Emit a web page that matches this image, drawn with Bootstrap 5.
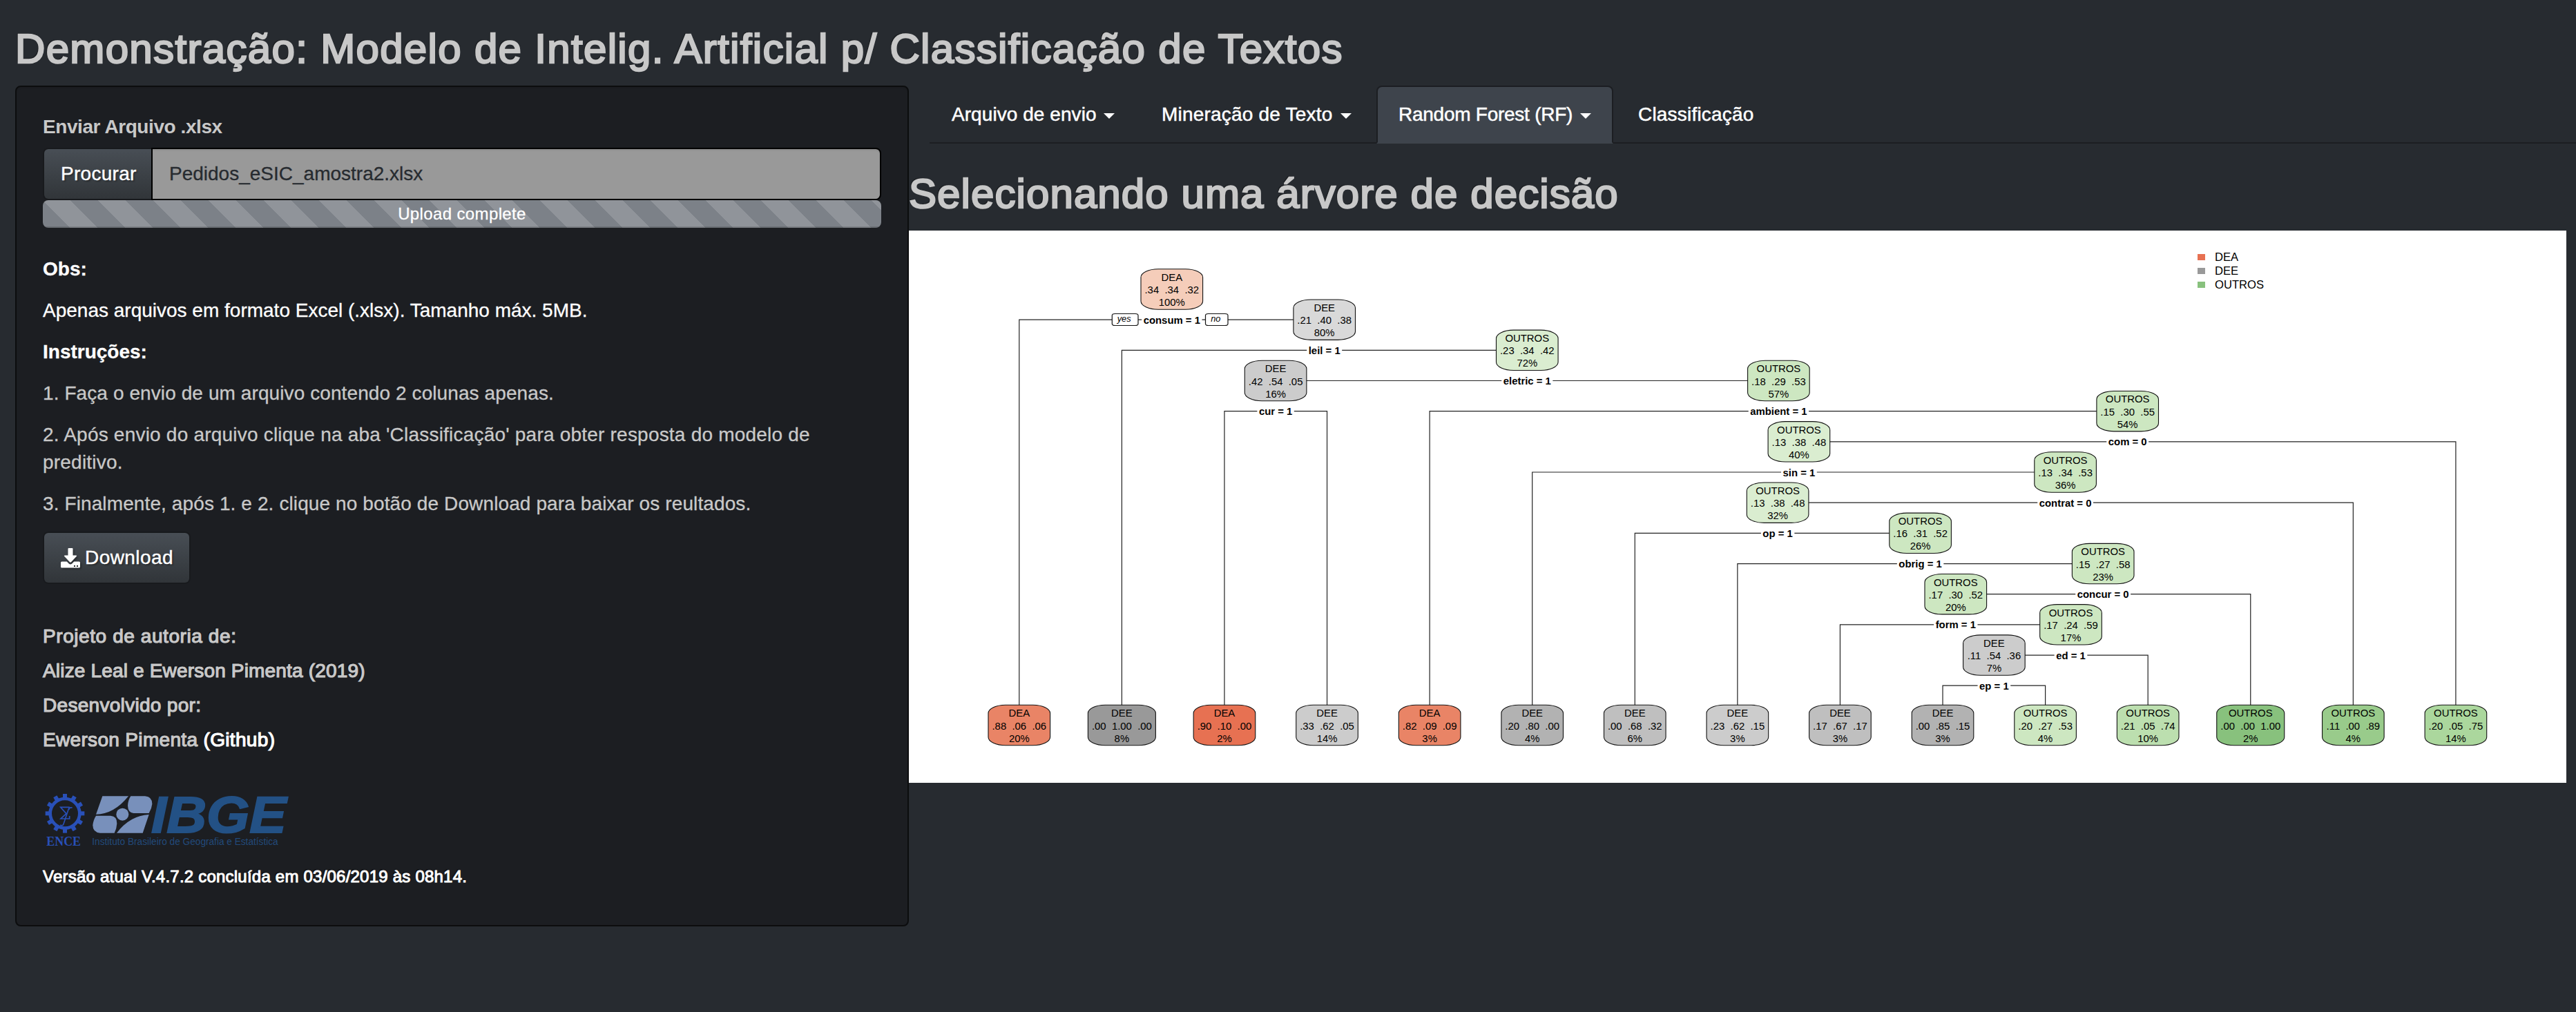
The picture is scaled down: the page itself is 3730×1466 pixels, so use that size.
<!DOCTYPE html>
<html lang="pt-BR">
<head>
<meta charset="utf-8">
<meta name="viewport" content="width=device-width, initial-scale=1">
<title>Modelo de Intelig. Artificial p/ Classificação de Textos</title>
<link href="https://cdn.jsdelivr.net/npm/bootstrap@5.3.0/dist/css/bootstrap.min.css" rel="stylesheet">
<style>
  body { background: #272b30; color: #c8c8c8; font-family: "Liberation Sans", Arial, sans-serif; font-size: 28px; line-height: 40px; overflow-x: hidden; }
  .page-wrap { padding-left: 22px; }
  .page-head, .section-head { font-size: 60px; line-height: 66px; font-weight: 400; color: #c8c8c8; -webkit-text-stroke: 2.4px #c8c8c8; text-shadow: -2px -2px 0 rgba(0,0,0,.3); white-space: nowrap; }
  .page-head { margin: 38px 0 20px; letter-spacing: 1.33px; }
  .section-head { margin: 40px 0 20px; letter-spacing: 1.09px; }
  .side-col { width: 1294px; }
  .side-panel { background: #1c1e22; border: 2px solid #0c0d0e; border-radius: 8px; padding: 38px 38px 57px; box-shadow: inset 0 2px 2px rgba(0,0,0,.05); }
  .side-panel p { margin: 0 0 20px; -webkit-text-stroke: .3px currentColor; }
  .file-label { font-weight: 700; letter-spacing: -.42px; margin-bottom: 10px; }
  .btn-slate, .btn-slate:hover { color: #fff; font-size: 28px; line-height: 40px; border: 2px solid rgba(0,0,0,.12); border-radius: 8px; background: linear-gradient(#484e55, #3a3f44 60%, #313539) padding-box; text-shadow: 2px 2px 2px rgba(0,0,0,.3); -webkit-text-stroke: .4px #fff; padding: 16px 24px; }
  .btn-browse { width: 157px; padding-left: 24px; padding-right: 0; text-align: left; letter-spacing: .28px; border-right-width: 0; }
  .file-name, .file-name:disabled { background: #999; color: #272b30; border: 2px solid #000; border-radius: 0 8px 8px 0; font-size: 28px; line-height: 40px; height: 76px; padding: 16px 24px; box-shadow: inset 0 2px 2px rgba(0,0,0,.075); opacity: 1; -webkit-text-stroke: .3px currentColor; }
  .upload-progress { height: 40px; border-radius: 8px; margin-bottom: 40px; background: #1c1e22; --bs-progress-bar-bg: #7a8288; }
  .upload-progress .progress-bar { background-color: #7c8188; background-size: 80px 80px; font-size: 24px; line-height: 40px; letter-spacing: .37px; color: #fff; box-shadow: inset 0 -2px 0 rgba(0,0,0,.15); -webkit-text-stroke: .3px #fff; }
  .txt-white { color: #fff; }
  .btn-download { width: 214px; height: 76px; letter-spacing: .43px; gap: 7px; white-space: nowrap; margin-bottom: 61px; }
  .btn-download svg { filter: drop-shadow(2px 2px 1px rgba(0,0,0,.3)); }
  .credit { font-size: 28px; line-height: 30px; font-weight: 400; margin: 0 0 20px; color: #c8c8c8; -webkit-text-stroke: 1.2px currentColor; text-shadow: -2px -2px 0 rgba(0,0,0,.3); }
  .credit a { color: #fff; text-decoration: none; }
  .logo-art { display: block; width: 360px; height: 82px; margin: 61px 0 27px; overflow: visible; }
  .version-line { font-size: 24px; line-height: 26px; font-weight: 400; margin: 0; color: #fff; letter-spacing: .22px; -webkit-text-stroke: 1px #fff; text-shadow: -2px -2px 0 rgba(0,0,0,.3); }
  .main-tabs { margin-left: 30px; height: 84px; border-bottom: 2px solid #1c1e22; }
  .main-tabs .nav-link, .main-tabs .nav-link.active { height: 84px; margin-bottom: -2px; color: #fff; border: 2px solid transparent; border-radius: 8px 8px 0 0; padding: 20px 30px; line-height: 40px; white-space: nowrap; -webkit-text-stroke: .5px #fff; }
  .main-tabs .nav-link.active { background: #3e444c; border-color: #1c1e22; border-bottom-color: #3e444c; }
  .main-tabs .nav-item { margin-right: 4px; }
  .main-tabs .dropdown-toggle::after { border-top: 8px solid; border-right: 8px solid transparent; border-left: 8px solid transparent; border-bottom: 0; margin: 4px 0 0 auto; }
  .tab-a { width: 300px; letter-spacing: .06px; }
  .tab-b { width: 339px; letter-spacing: .2px; }
  .tab-c { width: 343px; letter-spacing: -.258px; }
  .tab-d { letter-spacing: .2px; }
  .tree-plot { display: block; width: 2400px; height: 800px; background: #fff; font-family: "Liberation Sans", Arial, sans-serif; }
</style>
</head>
<body>
<div class="container-fluid p-0">
  <div class="page-wrap d-flex flex-column">
    <h2 class="page-head">Demonstração: Modelo de Intelig. Artificial p/ Classificação de Textos</h2>
    <div class="d-flex align-items-start">
      <aside class="side-col flex-shrink-0">
        <form class="side-panel">
          <label class="file-label d-block">Enviar Arquivo .xlsx</label>
          <div class="input-group flex-nowrap">
            <button type="button" class="btn btn-slate btn-browse flex-shrink-0">Procurar</button>
            <input type="text" class="form-control file-name ms-0" value="Pedidos_eSIC_amostra2.xlsx" readonly>
          </div>
          <div class="progress upload-progress">
            <div class="progress-bar progress-bar-striped w-100">Upload complete</div>
          </div>
          <p class="txt-white fw-bold">Obs:</p>
          <p class="txt-white">Apenas arquivos em formato Excel (.xlsx). Tamanho máx. 5MB.</p>
          <p class="txt-white fw-bold">Instruções:</p>
          <p style="letter-spacing:.092px">1. Faça o envio de um arquivo contendo 2 colunas apenas.</p>
          <p style="letter-spacing:.211px">2. Após envio do arquivo clique na aba 'Classificação' para obter resposta do modelo de preditivo.</p>
          <p style="letter-spacing:.11px">3. Finalmente, após 1. e 2. clique no botão de Download para baixar os reultados.</p>
          <a class="btn btn-slate btn-download d-flex align-items-center" href="#">
            <svg width="28" height="29" viewBox="0 0 28 29" class="flex-shrink-0" aria-hidden="true"><path fill="#fff" d="M10.5 1Q10.500 0 11.500 0H16.500Q17.500 0 17.500 1V10.500H22Q24 10.500 22.700 12L15 20.300Q14 21.200 13 20.300L5.300 12Q4 10.500 6 10.500H10.500Z"/><path fill="#fff" fill-rule="evenodd" d="M1.500 19.500H8.800L12 22.700Q14 24.300 16 22.700L19.200 19.500H26.500Q28 19.500 28 21V27Q28 28.500 26.500 28.500H1.500Q0 28.500 0 27V21Q0 19.500 1.500 19.500ZM19 25h2v2h-2ZM23 25h2v2h-2Z"/></svg>
            <span>Download</span>
          </a>
          <h5 class="credit" style="letter-spacing:.58px">Projeto de autoria de:</h5>
          <h5 class="credit" style="letter-spacing:.17px">Alize Leal e Ewerson Pimenta (2019)</h5>
          <h5 class="credit" style="letter-spacing:.3px">Desenvolvido por:</h5>
          <h5 class="credit mb-0" style="letter-spacing:.33px">Ewerson Pimenta <a href="#">(Github)</a></h5>
          <svg class="logo-art" viewBox="36 55 1080 246" role="img" aria-label="ENCE IBGE">
            <g fill="#2950b8">
              <g id="teeth"></g>
              <circle cx="132" cy="146" r="64" fill="none" stroke="#2950b8" stroke-width="14"/>
              <path fill="none" stroke="#2950b8" stroke-width="5" d="M150 130V119H113L138 147L114 169H152V157M112 196Q124 204 128 186L146 132Q150 118 164 121"/>
              <text x="52" y="287" font-family="Liberation Serif, serif" font-weight="700" font-size="56" textLength="149" lengthAdjust="spacingAndGlyphs">ENCE</text>
            </g>
            <g fill="#7890bb">
              <path d="M295 71H408Q345 150 267 150Z"/>
              <path d="M418 71H480Q511 73 511 105Q509 125 497 145H430Q406 143 405 112Q406 88 418 71Z"/>
              <path d="M267 156H330Q359 158 358 190Q357 212 347 231H285Q253 229 253 197Q255 175 267 156Z"/>
              <path d="M497 151L470 231H357Q415 155 497 151Z"/>
              <circle cx="382" cy="150" r="27"/>
            </g>
            <text x="507" y="229" font-family="Liberation Sans, sans-serif" font-weight="700" font-style="italic" font-size="222" fill="#235185" stroke="#235185" stroke-width="6" textLength="587" lengthAdjust="spacingAndGlyphs">IBGE</text>
            <text x="250" y="284" font-family="Liberation Sans, sans-serif" font-size="44" fill="#224a7b" textLength="808" lengthAdjust="spacingAndGlyphs">Instituto Brasileiro de Geografia e Estatística</text>
          </svg>
          <h6 class="version-line">Versão atual V.4.7.2 concluída em 03/06/2019 às 08h14.</h6>
        </form>
      </aside>
      <main class="flex-grow-1">
        <ul class="nav nav-tabs main-tabs flex-nowrap">
          <li class="nav-item"><a class="nav-link dropdown-toggle d-flex align-items-center tab-a" href="#">Arquivo de envio</a></li>
          <li class="nav-item"><a class="nav-link dropdown-toggle d-flex align-items-center tab-b" href="#">Mineração de Texto</a></li>
          <li class="nav-item"><a class="nav-link dropdown-toggle d-flex align-items-center active tab-c" href="#">Random Forest (RF)</a></li>
          <li class="nav-item"><a class="nav-link tab-d" href="#">Classificação</a></li>
        </ul>
        <h2 class="section-head">Selecionando uma árvore de decisão</h2>
        <svg class="tree-plot" id="tree" viewBox="1316 334 2400 800"></svg>
      </main>
    </div>
  </div>
</div>
<script src="https://cdn.jsdelivr.net/npm/bootstrap@5.3.0/dist/js/bootstrap.bundle.min.js"></script>
<script>
  // Gear teeth of the ENCE emblem
  let teeth = '';
  for (let a = 0; a < 360; a += 30) teeth += `<rect x="123" y="61" width="18" height="20" transform="rotate(${a} 132 146)"/>`;
  document.getElementById('teeth').innerHTML = teeth;

  // Decision tree: leaves sit on a regular grid, inner nodes on regular levels
  const leafX = i => 1475.8 + 148.58 * i;
  const levelY = l => 419 + 44.17 * l;
  const LEAF_Y = 1050.5;

  const leaves = [
    ['DEA', '.88  .06  .06', '20%', '#e98466'], ['DEE', '.00  1.00  .00', '8%', '#999999'],
    ['DEA', '.90  .10  .00', '2%', '#e77152'], ['DEE', '.33  .62  .05', '14%', '#cccccc'],
    ['DEA', '.82  .09  .09', '3%', '#e98466'], ['DEE', '.20  .80  .00', '4%', '#b2b2b2'],
    ['DEE', '.00  .68  .32', '6%', '#bfbfbf'], ['DEE', '.23  .62  .15', '3%', '#cccccc'],
    ['DEE', '.17  .67  .17', '3%', '#bfbfbf'], ['DEE', '.00  .85  .15', '3%', '#b2b2b2'],
    ['OUTROS', '.20  .27  .53', '4%', '#cde7c1'], ['OUTROS', '.21  .05  .74', '10%', '#bcdfaf'],
    ['OUTROS', '.00  .00  1.00', '2%', '#88c17d'], ['OUTROS', '.11  .00  .89', '4%', '#99cb8b'],
    ['OUTROS', '.20  .05  .75', '14%', '#abd79d']
  ];
  // x, level, class, probabilities, share, fill, split, left end, right end (numbers below 15 are leaves)
  const inner = [
    [1696.8, 0, 'DEA', '.34  .34  .32', '100%', '#f5cdba', 'consum = 1', 0, 1917.7],
    [1917.7, 1, 'DEE', '.21  .40  .38', '80%', '#d9d9d9', 'leil = 1', 1, 2211.3],
    [2211.3, 2, 'OUTROS', '.23  .34  .42', '72%', '#daedd0', 'eletric = 1', 1847.1, 2575.4],
    [1847.1, 3, 'DEE', '.42  .54  .05', '16%', '#cccccc', 'cur = 1', 2, 3],
    [2575.4, 3, 'OUTROS', '.18  .29  .53', '57%', '#cde7c1', 'ambient = 1', 4, 3080.7],
    [3080.7, 4, 'OUTROS', '.15  .30  .55', '54%', '#cde7c1', 'com = 0', 2604.9, 14],
    [2604.9, 5, 'OUTROS', '.13  .38  .48', '40%', '#daedd0', 'sin = 1', 5, 2990.6],
    [2990.6, 6, 'OUTROS', '.13  .34  .53', '36%', '#cde7c1', 'contrat = 0', 2574.1, 13],
    [2574.1, 7, 'OUTROS', '.13  .38  .48', '32%', '#daedd0', 'op = 1', 6, 2780.6],
    [2780.6, 8, 'OUTROS', '.16  .31  .52', '26%', '#cde7c1', 'obrig = 1', 7, 3045.2],
    [3045.2, 9, 'OUTROS', '.15  .27  .58', '23%', '#cde7c1', 'concur = 0', 2831.8, 12],
    [2831.8, 10, 'OUTROS', '.17  .30  .52', '20%', '#cde7c1', 'form = 1', 8, 2998.5],
    [2998.5, 11, 'OUTROS', '.17  .24  .59', '17%', '#cde7c1', 'ed = 1', 2887.4, 11],
    [2887.4, 12, 'DEE', '.11  .54  .36', '7%', '#cccccc', 'ep = 1', 9, 10]
  ];

  let lines = '', boxes = '', labels = '';
  const put = (x, y, t, extra = '') => `<text x="${x}" y="${y}" text-anchor="middle" font-size="14.9" ${extra} style="white-space:pre">${t}</text>`;
  const box = (x, y, [cls, probs, pct, fill]) => {
    const w = probs.includes('1.00') ? 98 : 89.6;
    return `<rect x="${x - w / 2}" y="${y - 29.2}" width="${w}" height="58.4" rx="25" ry="12" fill="${fill}" stroke="#111" stroke-width="1.1"/>`
      + put(x, y - 12.2, cls) + put(x, y + 6, probs) + put(x, y + 24, pct);
  };
  for (const [x, l, cls, probs, pct, fill, split, a, b] of inner) {
    const y = levelY(l + 1);
    const xa = a < 15 ? leafX(a) : a, xb = b < 15 ? leafX(b) : b;
    lines += `<path d="M${xa} ${a < 15 ? LEAF_Y : y}V${y}H${xb}V${b < 15 ? LEAF_Y : y}" fill="none" stroke="#222" stroke-width="1.2"/>`;
    boxes += box(x, levelY(l), [cls, probs, pct, fill]);
    labels += '<g class="split">' + put(x, y + 5.500, split, 'font-weight="700"') + '</g>';
  }
  leaves.forEach((n, i) => boxes += box(leafX(i), LEAF_Y, n));

  const tag = (x, w, t) => `<rect x="${x}" y="454.5" width="${w}" height="17" rx="4" ry="2.500" fill="#fff" stroke="#111" stroke-width="1.2"/>`
    + `<text x="${x + w / 2 - 1.5}" y="466.3" text-anchor="middle" font-size="12.8" font-style="italic">${t}</text>`;
  const legend = [['DEA', '#e77152'], ['DEE', '#999999'], ['OUTROS', '#88c17d']].map(([t, c], i) =>
    `<rect x="3182" y="${368 + 20 * i}" width="11" height="9" fill="${c}"/><text x="3207" y="${378 + 20 * i}" font-size="16.6">${t}</text>`).join('');

  const tree = document.getElementById('tree');
  tree.innerHTML = lines + labels + boxes + tag(1610.3, 37.7, 'yes') + tag(1745.5, 32.5, 'no') + legend;
  // White gap in the branch line behind every split label
  tree.querySelectorAll('.split').forEach(g => {
    const b = g.getBBox();
    g.insertAdjacentHTML('afterbegin', `<rect x="${b.x - 2.500}" y="${b.y + 3}" width="${b.width + 5}" height="${b.height - 6}" fill="#fff"/>`);
  });
</script>
</body>
</html>
